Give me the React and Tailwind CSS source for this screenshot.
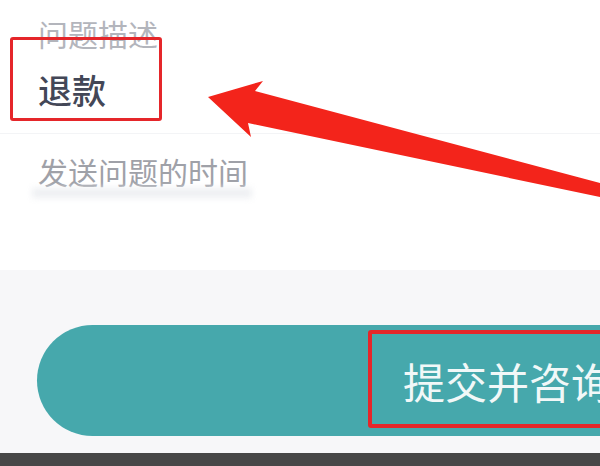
import React from 'react'

// annotated screenshot of a consult form: question field, time field and submit button
function Arrow() {
  return (
    <svg
      className="absolute left-0 top-0 pointer-events-none"
      width="600"
      height="466"
      viewBox="0 0 600 466"
    >
      <polygon
        points="208,97 263,81 255,91 600,183 600,197 248,123 251,137"
        fill="#f3241b"
      />
    </svg>
  )
}

export default function App() {
  return (
    <div
      className="relative w-[600px] h-[466px] overflow-hidden bg-white"
      style={{ fontFamily: '"Noto Sans CJK SC", "Noto Sans", sans-serif' }}
    >
      {/* form area */}
      <div className="h-[270px] bg-white pt-[18px]">
        <div className="pl-[38px] text-[30px] leading-[30px] text-[#b3b5bc]">问题描述</div>
        <div className="pl-[38px] mt-[25px] text-[34px] leading-[34px] font-medium text-[#434757]">
          退款
        </div>
        <div className="mt-[26px] border-t border-[#f3f4f6]" />
        <div className="pl-[38px] mt-[22px] text-[30px] leading-[30px] text-[#9fa1a8]">
          发送问题的时间
        </div>
        <div className="ml-[32px] mt-[2px] h-[10px] w-[220px] bg-[#eef0f3] blur-[3px]" />
      </div>

      {/* bottom bar */}
      <div className="h-[183px] bg-[#f7f7f9] pt-[55px]">
        <div className="ml-[37px] w-[640px] h-[111px] rounded-l-full bg-[#46a8ac] flex items-center">
          <span className="ml-[366px] text-[42px] leading-[42px] font-normal text-[#f1f8f8] whitespace-nowrap">
            提交并咨询
          </span>
        </div>
      </div>
      <div className="h-[13px] bg-[#474747]" />

      {/* annotations */}
      <div className="absolute left-[10px] top-[37px] w-[152px] h-[84px] border-[3px] border-[#e5262a] rounded-[3px]" />
      <div className="absolute left-[368px] top-[330px] w-[260px] h-[98px] border-[4px] border-[#e5262a] rounded-[3px]" />
      <Arrow />
    </div>
  )
}
